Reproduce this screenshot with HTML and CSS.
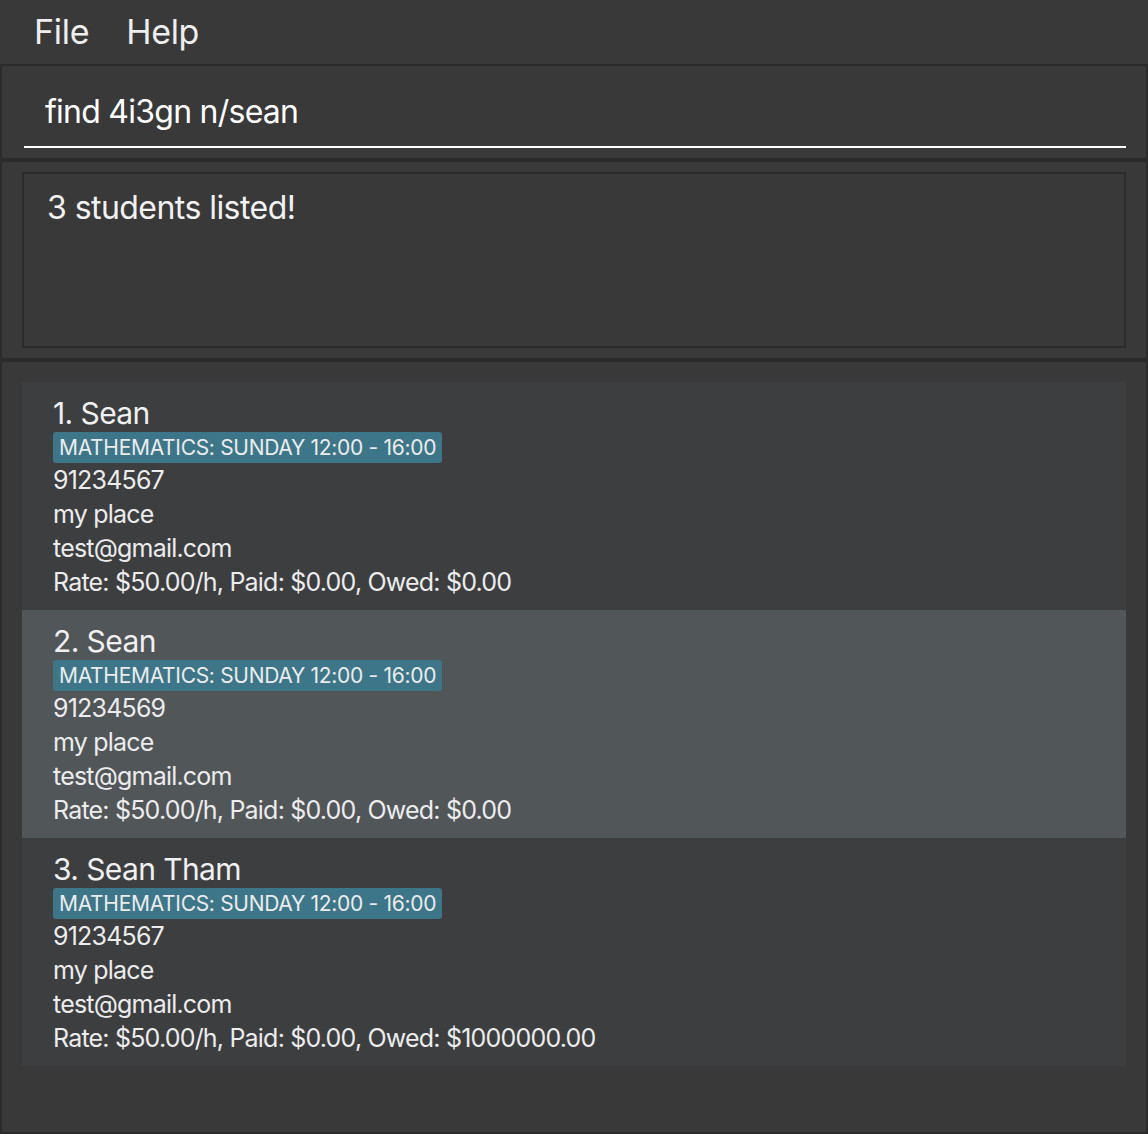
FILE: index.html
```html
<!DOCTYPE html>
<html>
<head>
<meta charset="utf-8">
<link rel="stylesheet" href="styles.css">
</head>
<body>
<div class="menubar">
  <span class="menu-item">File</span>
  <span class="menu-item">Help</span>
</div>
<div class="pane command-pane">
  <div class="command-box">find 4i3gn n/sean</div>
</div>
<div class="pane result-pane">
  <div class="result-box">3 students listed!</div>
</div>
<div class="pane list-pane">
  <div class="list">
    <div class="card">
      <div class="name">1. Sean</div>
      <div class="tags"><span class="tag">MATHEMATICS: SUNDAY 12:00 - 16:00</span></div>
      <div class="field">91234567</div>
      <div class="field">my place</div>
      <div class="field">test@gmail.com</div>
      <div class="field">Rate: $50.00/h, Paid: $0.00, Owed: $0.00</div>
    </div>
    <div class="card selected">
      <div class="name">2. Sean</div>
      <div class="tags"><span class="tag">MATHEMATICS: SUNDAY 12:00 - 16:00</span></div>
      <div class="field">91234569</div>
      <div class="field">my place</div>
      <div class="field">test@gmail.com</div>
      <div class="field">Rate: $50.00/h, Paid: $0.00, Owed: $0.00</div>
    </div>
    <div class="card">
      <div class="name">3. Sean Tham</div>
      <div class="tags"><span class="tag">MATHEMATICS: SUNDAY 12:00 - 16:00</span></div>
      <div class="field">91234567</div>
      <div class="field">my place</div>
      <div class="field">test@gmail.com</div>
      <div class="field">Rate: $50.00/h, Paid: $0.00, Owed: $1000000.00</div>
    </div>
  </div>
</div>
</body>
</html>
```
FILE: styles.css
```css
html, body {
  margin: 0;
  padding: 0;
  height: 100%;
}
body {
  background: #393939;
  font-family: Inter, "Liberation Sans", sans-serif;
  color: #ececec;
  display: flex;
  flex-direction: column;
  overflow: hidden;
}
.menubar {
  height: 64px;
  display: flex;
  align-items: center;
  padding-left: 34px;
  gap: 37px;
  font-size: 34px;
  letter-spacing: -0.3px;
  color: #eeeeee;
  box-sizing: border-box;
  padding-bottom: 2px;
}
.pane {
  border: 2px solid #2b2b2b;
  box-sizing: border-box;
}
.command-pane {
  height: 96px;
  padding: 0 20px 10px 22px;
  display: flex;
  align-items: flex-end;
}
.command-box {
  flex: 1;
  font-size: 32px;
  letter-spacing: -0.75px;
  color: #ffffff;
  padding: 0 0 14px 21px;
  border-bottom: 2px solid #ffffff;
  line-height: 40px;
}
.result-pane {
  height: 200px;
  padding: 10px 20px 10px 20px;
  display: flex;
}
.result-box {
  flex: 1;
  border: 2px solid #2b2b2b;
  font-size: 32px;
  letter-spacing: -0.55px;
  color: #f2f2f2;
  padding: 12px 23px;
  line-height: 44px;
}
.list-pane {
  flex: 1;
  padding: 20px 20px 0 20px;
}
.list {
  display: flex;
  flex-direction: column;
}
.card {
  background: #3c3e40;
  height: 228px;
  box-sizing: border-box;
  padding: 13px 31px 0;
}
.card.selected {
  background: #515659;
}
.name {
  font-size: 30px;
  letter-spacing: -0.6px;
  line-height: 36px;
  color: #f0f0f0;
}
.tags {
  display: flex;
  height: 31px;
  margin-top: 1px;
}
.tag {
  background: #3e7689;
  color: #ececec;
  font-size: 21px;
  letter-spacing: -0.3px;
  line-height: 31px;
  padding: 0 6px;
  border-radius: 3px;
}
.field {
  font-size: 25px;
  letter-spacing: -0.8px;
  line-height: 34px;
  color: #ececec;
}
```
